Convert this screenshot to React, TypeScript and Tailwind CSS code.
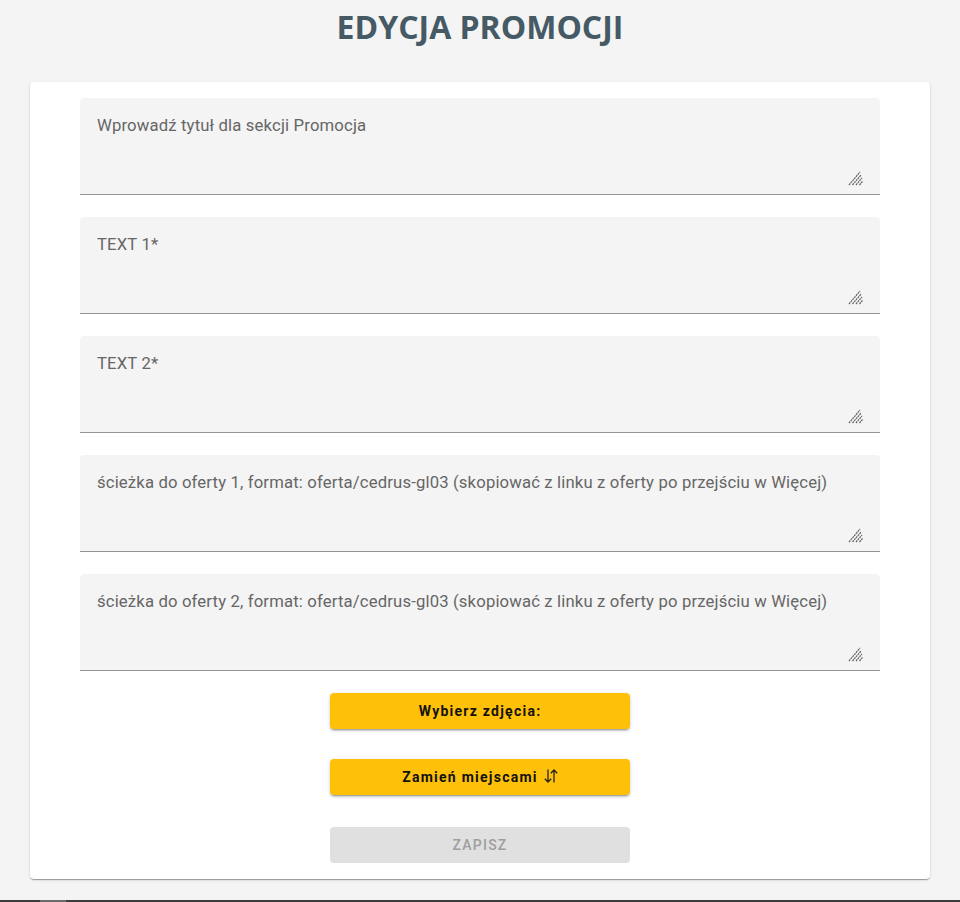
const fields = [
  "Wprowadź tytuł dla sekcji Promocja",
  "TEXT 1*",
  "TEXT 2*",
  "ścieżka do oferty 1, format: oferta/cedrus-gl03 (skopiować z linku z oferty po przejściu w Więcej)",
  "ścieżka do oferty 2, format: oferta/cedrus-gl03 (skopiować z linku z oferty po przejściu w Więcej)",
];

const ResizeGrip = () => (
  <svg width="15" height="15" viewBox="0 0 15 15" className="absolute right-[17px] bottom-[8px] pointer-events-none">
    <g stroke="#5f5f5f" strokeWidth="1.2" strokeDasharray="2 0.7">
      <line x1="1" y1="14" x2="12" y2="1" />
      <line x1="4.5" y1="14" x2="13" y2="4" />
      <line x1="8" y1="14" x2="14" y2="7" />
      <line x1="11.5" y1="14" x2="14.5" y2="10.5" />
    </g>
  </svg>
);

const SwapIcon = () => (
  <svg width="14" height="14" viewBox="0 0 14 14" className="inline-block ml-[6px] -mt-[3px] align-middle" fill="none" stroke="#222" strokeWidth="1.3">
    <path d="M4 0.5v12.5M0.8 9.8L4 13l3.2-3.2" />
    <path d="M10 13.5V1M6.8 4.2L10 1l3.2 3.2" />
  </svg>
);

const buttonShadow =
  "shadow-[0_3px_1px_-2px_rgba(0,0,0,0.2),0_2px_2px_0_rgba(0,0,0,0.14),0_1px_5px_0_rgba(0,0,0,0.12)]";

const App = () => {
  return (
    <div className="min-h-[902px] flex flex-col bg-[#f4f4f4] font-['Roboto',sans-serif]">
      <h1 className="pt-[5px] text-center text-[32px] leading-[44px] font-bold text-[#455a64] font-['Open_Sans',sans-serif]">
        EDYCJA PROMOCJI
      </h1>

      <div className="mx-[30px] mt-[33px] bg-white rounded-[4px] shadow-[0_2px_1px_-1px_rgba(0,0,0,0.2),0_1px_1px_0_rgba(0,0,0,0.14),0_1px_3px_0_rgba(0,0,0,0.12)] px-[50px] pt-4 pb-[16px]">
        <div className="flex flex-col gap-[22px]">
          {fields.map((label, i) => (
            <div
              key={i}
              className="relative h-[97px] flex flex-col bg-[#f4f4f4] rounded-t-[4px] border-b border-[#949494] pl-[17px] pr-[16px] pt-[16px] pb-[5px]"
            >
              <textarea
                placeholder={label}
                className="flex-1 w-full resize-none bg-transparent outline-none text-[16.7px] leading-[24px] tracking-[0.15px] text-[#333] placeholder:text-[#666]"
              />
              <ResizeGrip />
            </div>
          ))}
        </div>

        <div className="flex flex-col items-center mt-[22px]">
          <button className={`w-[300px] h-[36px] rounded-[4px] bg-[#ffc107] text-[14px] font-bold tracking-[1.25px] text-[#111] ${buttonShadow}`}>
            Wybierz zdjęcia:
          </button>
          <button className={`mt-[30px] w-[300px] h-[36px] rounded-[4px] bg-[#ffc107] text-[14px] font-bold tracking-[1.25px] text-[#111] ${buttonShadow}`}>
            Zamień miejscami
            <SwapIcon />
          </button>
          <button
            disabled
            className="mt-[32px] w-[300px] h-[36px] rounded-[4px] bg-[#e0e0e0] text-[14px] font-medium tracking-[1.25px] uppercase text-[#9e9e9e]"
          >
            Zapisz
          </button>
        </div>
      </div>

      <div className="mt-auto h-[2px] bg-[#3c3c3c] flex">
        <div className="ml-[40px] w-[26px] bg-[#6b6b6b]" />
      </div>
    </div>
  );
};

export default App;
